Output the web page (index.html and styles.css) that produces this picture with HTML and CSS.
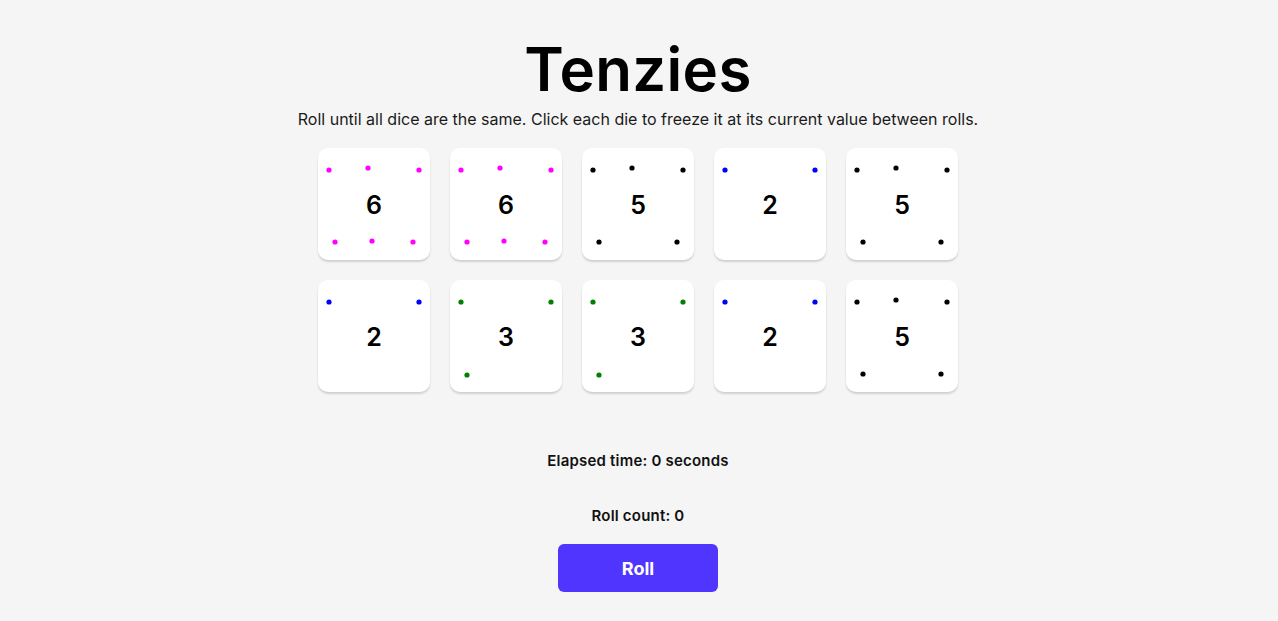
FILE: index.html
```html
<!DOCTYPE html>
<html lang="en">
<head>
<meta charset="utf-8">
<title>Tenzies</title>
<link rel="stylesheet" href="styles.css">
</head>
<body>
<main class="app">
  <h1 class="title">Tenzies</h1>
  <p class="instructions">Roll until all dice are the same. Click each die to freeze it at its current value between rolls.</p>
  <div class="dice">
    <button class="die pink"><svg class="pips" viewBox="0 0 112 112"><circle cx="11" cy="22" r="2.6"/><circle cx="50" cy="20" r="2.6"/><circle cx="101" cy="22" r="2.6"/><circle cx="17" cy="94" r="2.6"/><circle cx="54" cy="93" r="2.6"/><circle cx="95" cy="94" r="2.6"/></svg><span class="num">6</span></button>
    <button class="die pink"><svg class="pips" viewBox="0 0 112 112"><circle cx="11" cy="22" r="2.6"/><circle cx="50" cy="20" r="2.6"/><circle cx="101" cy="22" r="2.6"/><circle cx="17" cy="94" r="2.6"/><circle cx="54" cy="93" r="2.6"/><circle cx="95" cy="94" r="2.6"/></svg><span class="num">6</span></button>
    <button class="die black"><svg class="pips" viewBox="0 0 112 112"><circle cx="11" cy="22" r="2.6"/><circle cx="50" cy="20" r="2.6"/><circle cx="101" cy="22" r="2.6"/><circle cx="17" cy="94" r="2.6"/><circle cx="95" cy="94" r="2.6"/></svg><span class="num">5</span></button>
    <button class="die blue"><svg class="pips" viewBox="0 0 112 112"><circle cx="11" cy="22" r="2.6"/><circle cx="101" cy="22" r="2.6"/></svg><span class="num">2</span></button>
    <button class="die black"><svg class="pips" viewBox="0 0 112 112"><circle cx="11" cy="22" r="2.6"/><circle cx="50" cy="20" r="2.6"/><circle cx="101" cy="22" r="2.6"/><circle cx="17" cy="94" r="2.6"/><circle cx="95" cy="94" r="2.6"/></svg><span class="num">5</span></button>
    <button class="die blue"><svg class="pips" viewBox="0 0 112 112"><circle cx="11" cy="22" r="2.6"/><circle cx="101" cy="22" r="2.6"/></svg><span class="num">2</span></button>
    <button class="die green"><svg class="pips" viewBox="0 0 112 112"><circle cx="11" cy="22" r="2.6"/><circle cx="101" cy="22" r="2.6"/><circle cx="17" cy="95" r="2.6"/></svg><span class="num">3</span></button>
    <button class="die green"><svg class="pips" viewBox="0 0 112 112"><circle cx="11" cy="22" r="2.6"/><circle cx="101" cy="22" r="2.6"/><circle cx="17" cy="95" r="2.6"/></svg><span class="num">3</span></button>
    <button class="die blue"><svg class="pips" viewBox="0 0 112 112"><circle cx="11" cy="22" r="2.6"/><circle cx="101" cy="22" r="2.6"/></svg><span class="num">2</span></button>
    <button class="die black"><svg class="pips" viewBox="0 0 112 112"><circle cx="11" cy="22" r="2.6"/><circle cx="50" cy="20" r="2.6"/><circle cx="101" cy="22" r="2.6"/><circle cx="17" cy="94" r="2.6"/><circle cx="95" cy="94" r="2.6"/></svg><span class="num">5</span></button>
  </div>
  <p class="stat elapsed">Elapsed time: 0 seconds</p>
  <p class="stat count">Roll count: 0</p>
  <button class="roll">Roll</button>
</main>
</body>
</html>
```

FILE: styles.css
```css
html, body {
  margin: 0;
  padding: 0;
  background: #f5f5f5;
}
body {
  font-family: Inter, "Noto Sans", sans-serif;
  color: #000;
}
.app {
  display: flex;
  flex-direction: column;
  align-items: center;
  padding-top: 38px;
  padding-right: 2px;
}
.title {
  margin: 0;
  font-size: 60px;
  line-height: 62px;
  font-weight: 600;
  letter-spacing: 0.3px;
}
.instructions {
  margin: 9px 0 0;
  font-size: 16px;
  line-height: 20px;
  color: #1a1a1a;
}
.dice {
  margin-top: 19px;
  display: grid;
  grid-template-columns: repeat(5, 112px);
  grid-auto-rows: 112px;
  gap: 20px;
}
.die {
  position: relative;
  border: none;
  padding: 0;
  margin: 0;
  background: #fff;
  border-radius: 10px;
  box-shadow: 0 2px 2px rgba(0, 0, 0, 0.15);
  display: flex;
  align-items: center;
  justify-content: center;
  font-family: Inter, sans-serif;
}
.pips {
  position: absolute;
  inset: 0;
  width: 112px;
  height: 112px;
}
.pink .pips { fill: #ff00ff; }
.blue .pips { fill: #0000ff; }
.green .pips { fill: #008000; }
.black .pips { fill: #000; }
.num {
  font-size: 25px;
  font-weight: 600;
  color: #000;
  line-height: 1;
  padding-top: 2px;
}
.stat {
  margin: 0;
  font-family: Inter, sans-serif;
  font-size: 15px;
  font-weight: 600;
  line-height: 20px;
  letter-spacing: 0.2px;
  color: #111;
}
.elapsed {
  margin-top: 59px;
}
.count {
  margin-top: 35px;
}
.roll {
  margin-top: 18px;
  width: 160px;
  height: 48px;
  border: none;
  border-radius: 6px;
  background: #5035ff;
  color: #fff;
  font-family: Inter, sans-serif;
  font-size: 18px;
  font-weight: 700;
}
```
